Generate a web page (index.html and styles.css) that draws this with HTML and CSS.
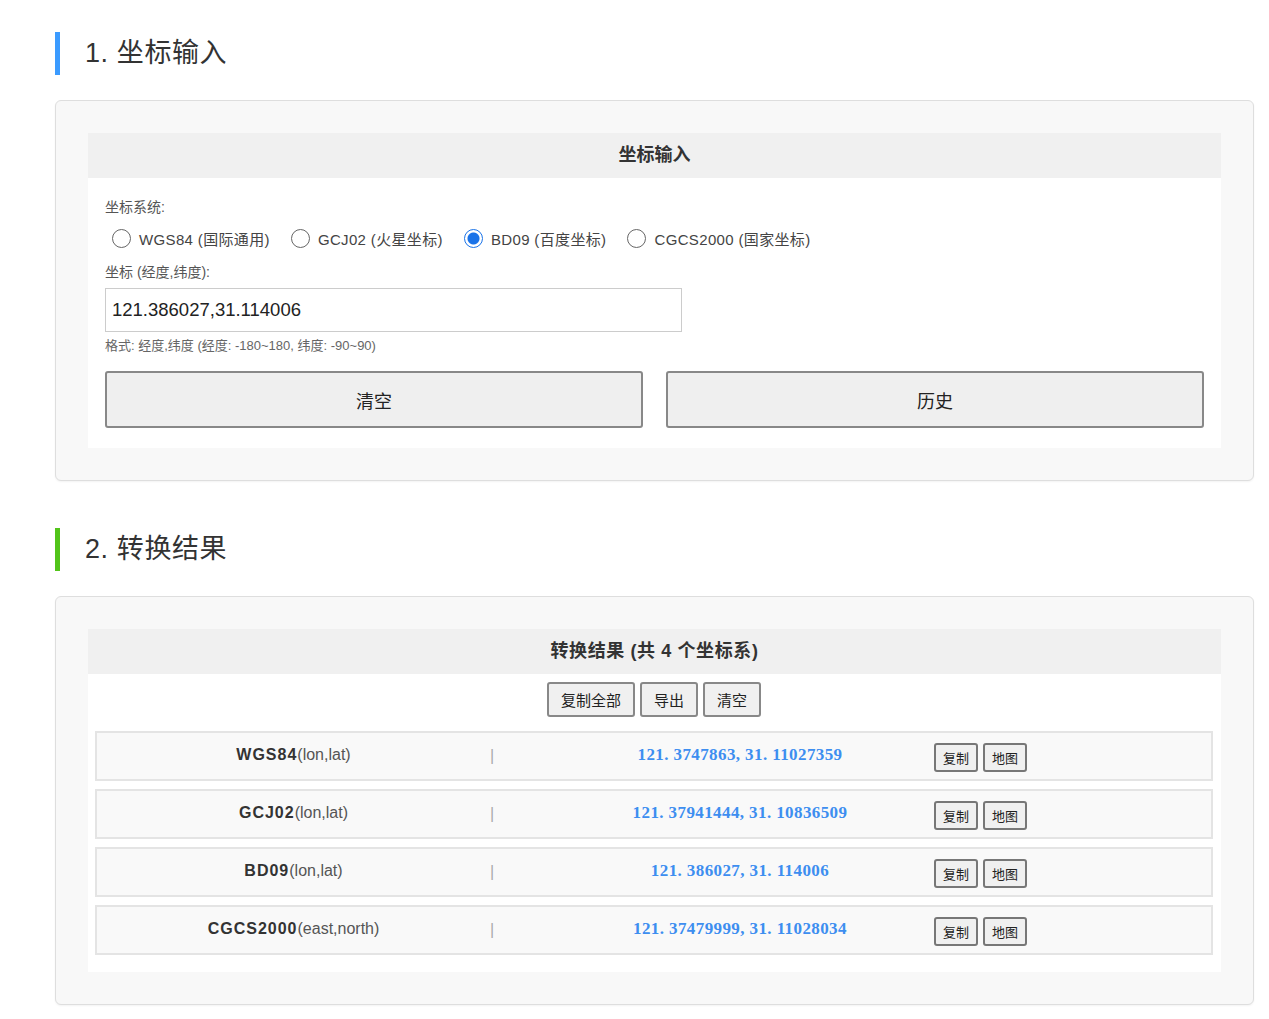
FILE: index.html
```html
<!DOCTYPE html>
<html lang="zh-CN">
<head>
  <meta charset="UTF-8">
  <meta name="viewport" content="width=device-width, initial-scale=1.0">
  <title>坐标转换</title>
  <link rel="stylesheet" href="styles.css">
</head>
<body>
  <div class="page">
    <!-- 1. 坐标输入 -->
    <h2 class="section-title blue">1. 坐标输入</h2>
    <div class="panel">
      <div class="box">
        <div class="box-header">坐标输入</div>
        <div class="box-body">
          <div class="field-label">坐标系统:</div>
          <div class="radio-row">
            <label class="radio"><input type="radio" name="crs" value="wgs84"> WGS84 (国际通用)</label>
            <label class="radio"><input type="radio" name="crs" value="gcj02"> GCJ02 (火星坐标)</label>
            <label class="radio"><input type="radio" name="crs" value="bd09" checked> BD09 (百度坐标)</label>
            <label class="radio"><input type="radio" name="crs" value="cgcs2000"> CGCS2000 (国家坐标)</label>
          </div>
          <div class="field-label second">坐标 (经度,纬度):</div>
          <input type="text" class="coord-input" value="121.386027,31.114006">
          <div class="hint">格式: 经度,纬度 (经度: -180~180, 纬度: -90~90)</div>
          <div class="big-buttons">
            <button class="big-btn">清空</button>
            <button class="big-btn">历史</button>
          </div>
        </div>
      </div>
    </div>

    <!-- 2. 转换结果 -->
    <h2 class="section-title green">2. 转换结果</h2>
    <div class="panel">
      <div class="box">
        <div class="box-header wide">转换结果 (共 4 个坐标系)</div>
        <div class="result-body">
          <div class="tools">
            <button class="tool-btn">复制全部</button>
            <button class="tool-btn">导出</button>
            <button class="tool-btn">清空</button>
          </div>
          <div class="result-row">
            <div class="crs-name"><b>WGS84</b>(lon,lat)</div>
            <div class="sep">|</div>
            <div class="crs-value">121. 3747863, 31. 11027359</div>
            <div class="row-actions"><button class="mini-btn">复制</button><button class="mini-btn">地图</button></div>
          </div>
          <div class="result-row">
            <div class="crs-name"><b>GCJ02</b>(lon,lat)</div>
            <div class="sep">|</div>
            <div class="crs-value">121. 37941444, 31. 10836509</div>
            <div class="row-actions"><button class="mini-btn">复制</button><button class="mini-btn">地图</button></div>
          </div>
          <div class="result-row">
            <div class="crs-name"><b>BD09</b>(lon,lat)</div>
            <div class="sep">|</div>
            <div class="crs-value">121. 386027, 31. 114006</div>
            <div class="row-actions"><button class="mini-btn">复制</button><button class="mini-btn">地图</button></div>
          </div>
          <div class="result-row">
            <div class="crs-name"><b>CGCS2000</b>(east,north)</div>
            <div class="sep">|</div>
            <div class="crs-value">121. 37479999, 31. 11028034</div>
            <div class="row-actions"><button class="mini-btn">复制</button><button class="mini-btn">地图</button></div>
          </div>
        </div>
      </div>
    </div>
  </div>
</body>
</html>
```

FILE: styles.css
```css
/* 坐标转换页面 */
body, html {
  margin: 0;
  padding: 0;
  background: #fff;
  color: #333;
  font-family: "Liberation Sans", "Noto Sans CJK SC", sans-serif;
}
.page {
  padding: 32px 15px 14px 55px;
}
.section-title {
  margin: 0 0 25px;
  height: 43px;
  line-height: 43px;
  padding-left: 25px;
  border-left: 5px solid #3b9bff;
  font-size: 27px;
  font-weight: normal;
  letter-spacing: 0.6px;
  color: #333;
}
.section-title.green {
  border-left-color: #52c41a;
}
.panel {
  background: #f8f8f8;
  border: 1px solid #dedede;
  border-radius: 6px;
  padding: 32px;
  margin-bottom: 47px;
  box-shadow: 0 1px 2px rgba(0, 0, 0, 0.05);
}
.box {
  background: #fff;
}
.box-header {
  background: #f0f0f0;
  height: 45px;
  line-height: 45px;
  text-align: center;
  font-weight: bold;
  font-size: 18px;
  color: #333;
}
.box-header.wide {
  letter-spacing: 0.6px;
}
.box-body {
  padding: 19px 17px 20px;
}
.field-label {
  font-size: 14px;
  line-height: 20px;
  color: #555;
}
.field-label.second {
  margin-top: 12px;
}
.radio-row {
  display: flex;
  gap: 21px;
  margin-top: 9px;
  padding-left: 7px;
  height: 24px;
  align-items: center;
}
.radio {
  display: flex;
  align-items: center;
  gap: 8px;
  font-size: 15px;
  letter-spacing: 0.35px;
  color: #444;
}
.radio input {
  appearance: none;
  margin: 0;
  width: 19px;
  height: 19px;
  border: 1px solid #666;
  border-radius: 50%;
  background: #fff;
}
.radio input:checked {
  border-color: #1a73e8;
  background: radial-gradient(circle, #1a73e8 0 5.5px, #fff 6.5px);
}
.coord-input {
  display: block;
  margin-top: 6px;
  width: 577px;
  height: 44px;
  box-sizing: border-box;
  border: 1px solid #ccc;
  padding: 0 6px;
  font-size: 18.5px;
  font-family: "Liberation Sans", sans-serif;
  color: #222;
}
.hint {
  margin-top: 6px;
  font-size: 13px;
  line-height: 16px;
  color: #666;
}
.big-buttons {
  display: flex;
  gap: 23px;
  margin-top: 17px;
}
.big-btn {
  flex: 1;
  height: 57px;
  background: #efefef;
  border: 2px solid #888;
  border-radius: 3px;
  font-size: 18px;
  font-family: "Noto Sans CJK SC", sans-serif;
  color: #222;
}
.result-body {
  padding: 8px 8px 17px 7px;
}
.tools {
  display: flex;
  justify-content: center;
  gap: 5px;
  margin-bottom: 14px;
}
.tool-btn {
  height: 35px;
  padding: 0 12px;
  background: #f0f0f0;
  border: 2px solid #888;
  border-radius: 3px;
  font-size: 15px;
  font-family: "Noto Sans CJK SC", sans-serif;
  color: #222;
}
.result-row {
  display: grid;
  grid-template-columns: 393px 56px 388px 1fr;
  align-items: center;
  height: 50px;
  box-sizing: border-box;
  background: #f9f9f9;
  border: 2px solid #e4e4e4;
  margin-bottom: 8px;
}
.result-row:last-child {
  margin-bottom: 0;
}
.crs-name {
  text-align: center;
  font-size: 16px;
  color: #555;
  margin-top: -2px;
}
.crs-name b {
  color: #333;
  letter-spacing: 1px;
}
.sep {
  color: #aaa;
  font-size: 16px;
}
.crs-value {
  text-align: center;
  font-family: "Liberation Serif", serif;
  font-weight: bold;
  font-size: 17px;
  letter-spacing: 0.4px;
  color: #3d8ef0;
  margin-top: -2px;
}
.row-actions {
  display: flex;
  gap: 5px;
  margin-top: 2px;
}
.mini-btn {
  height: 29px;
  padding: 0 7px;
  background: #f0f0f0;
  border: 2px solid #777;
  border-radius: 3px;
  font-size: 13px;
  font-family: "Noto Sans CJK SC", sans-serif;
  color: #222;
}
```
